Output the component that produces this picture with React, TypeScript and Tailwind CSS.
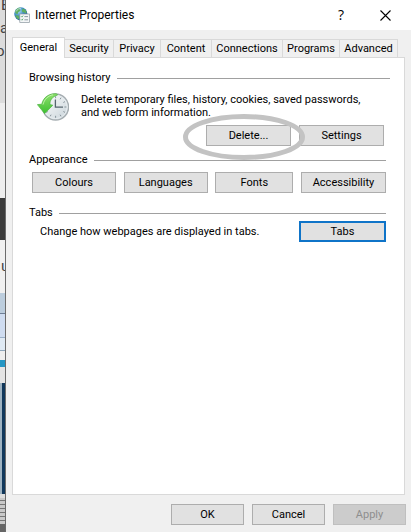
import { useState, type ReactNode } from "react";

import clsx from "clsx";

const tabs = [
  { name: "General", width: "w-[53px]" },
  { name: "Security", width: "w-[49px]" },
  { name: "Privacy", width: "w-[47px]" },
  { name: "Content", width: "w-[51px]" },
  { name: "Connections", width: "w-[71px]" },
  { name: "Programs", width: "w-[57px]" },
  { name: "Advanced", width: "w-[58px]" },
];

function GlobeIcon() {
  return (
    <svg viewBox="0 0 16 16" className="size-4 shrink-0" aria-hidden="true">
      <defs>
        <radialGradient id="globe" cx="0.35" cy="0.3" r="0.8">
          <stop offset="0" stopColor="#a9dcf4" />
          <stop offset="0.5" stopColor="#3787c4" />
          <stop offset="1" stopColor="#174a86" />
        </radialGradient>
      </defs>
      <circle cx="6.8" cy="6.8" r="6.6" fill="url(#globe)" />
      <path
        d="M1 4.2C2.4 1.6 4.6.6 6.8.6L5.4 2.4 6.6 3.8 4.2 5.2 3.6 7.2 1.6 6.6zM8.6 1.6l2.6.8 1.6 2.8-1.4 1.2-1.8-1.4-1.2.4-.6-2zM2.4 8.2l2.2.4.8 1.8-.8 2.2C3 11.6 1.8 10 1.2 8.4z"
        fill="#5fae62"
      />
      <path d="M2 4.5C3.2 2.4 5 1.4 7 1.2" fill="none" stroke="#d9eef8" strokeWidth="0.7" />
      <rect x="5.8" y="7" width="9.8" height="8.6" fill="#f4f6f7" stroke="#8b979e" strokeWidth="0.7" />
      <path d="M7.1 9.3l.8.8 1.2-1.5M7.1 12.4l.8.8 1.2-1.5" fill="none" stroke="#3f9a55" strokeWidth="0.8" />
      <path d="M10.4 9.6h3.6M10.4 12.8h3.6" stroke="#7f9099" strokeWidth="0.9" />
    </svg>
  );
}

function HistoryIcon() {
  return (
    <svg viewBox="0 0 32 28" className="h-7 w-8 shrink-0" aria-hidden="true">
      <defs>
        <linearGradient id="dial" x1="0" y1="0" x2="1" y2="1">
          <stop offset="0" stopColor="#ffffff" />
          <stop offset="1" stopColor="#c8d3d9" />
        </linearGradient>
        <linearGradient id="arrow" x1="0" y1="0" x2="0" y2="1">
          <stop offset="0" stopColor="#8fe06e" />
          <stop offset="1" stopColor="#3cbf30" />
        </linearGradient>
      </defs>
      <circle cx="18.6" cy="14" r="13" fill="url(#dial)" stroke="#a5adb1" strokeWidth="1.4" />
      <circle cx="18.6" cy="14" r="11.6" fill="none" stroke="#e7edf0" strokeWidth="1" />
      <path
        d="M18.6 3.2v2M18.6 22.8v2M27.4 14h2M24 4.7l-.9 1.6M28 8.6l-1.6.9M28 19.4l-1.6-.9M24 23.3l-.9-1.6M13.2 23.3l.9-1.6M9.3 19.4l1.5-.9"
        stroke="#87949b"
        strokeWidth="1"
      />
      <path d="M18.4 6.4v7.8h7.6" fill="none" stroke="#56656e" strokeWidth="1.3" />
      <path
        d="M19.5.8C12 .2 6.2 4.4 4.8 11.2L.4 11.6l7.2 9 8.2-8.4-2.8-.6C12.6 7.6 15 3.6 20.6 2z"
        fill="url(#arrow)"
        stroke="#4bb53d"
        strokeWidth="0.7"
      />
      <path d="M6 11.6C7.2 6.4 11 2.8 16 1.8" fill="none" stroke="#c6f5b0" strokeWidth="0.9" />
    </svg>
  );
}

function Button({
  children,
  className,
  disabled,
}: {
  children: ReactNode;
  className: string;
  disabled?: boolean;
}) {
  return (
    <button
      type="button"
      disabled={disabled}
      className={clsx(
        "flex h-[21px] items-center justify-center whitespace-nowrap",
        disabled
          ? "border border-[#bfbfbf] bg-[#cccccc] text-[#8e8e8e]"
          : "bg-[#e1e1e1]",
        className
      )}
    >
      {children}
    </button>
  );
}

function GroupTitle({ children }: { children: ReactNode }) {
  return (
    <div className="flex h-4 items-center gap-[6px]">
      <h2 className="whitespace-nowrap">{children}</h2>
      <div className="mt-[2px] h-px flex-1 bg-[#a0a0a0]" />
    </div>
  );
}

// Sliver of the page that shows behind the dialog
function Backdrop() {
  return (
    <div
      className="flex w-[5px] shrink-0 flex-col overflow-hidden bg-[#ececec] text-[15px] leading-4 text-[#444444]"
      aria-hidden="true"
    >
      <div className="flex h-[103px] flex-col gap-[7px] bg-[#dcdcdc]">
        <span className="-mt-[3px] pl-px">E</span>
        <span>a</span>
        <span className="-ml-1">o</span>
      </div>
      <div className="h-[95px] bg-[#eeeeee]" />
      <div className="h-[42px] bg-[#3b3b3b]" />
      <div className="h-[53px] bg-[#f0f0f0] pt-[18px] pl-px">u</div>
      <div className="h-[21px] border-b border-[#6e7e95] bg-[#bccddd]" />
      <div className="h-[24px] border-b border-[#9bb0c8] bg-[#cfdcf0]" />
      <div className="h-[13px] border-b border-[#8ea6bb] bg-[#dfe9f3]" />
      <div className="h-[9px] bg-[#eeeeee]" />
      <div className="h-[7px] bg-[#2596c4]" />
      <div className="h-[16px] bg-[#e4e4e4]" />
      <div className="h-[111px] border-l-2 border-[#9eb2c0] bg-[#10375a]" />
      <div className="h-[4px] bg-[#dddddd]" />
      <div className="flex flex-1 flex-col gap-[3px] bg-[#c9c9c9] pt-[2px]">
        <div className="h-px bg-[#777777]" />
        <div className="h-px bg-[#777777]" />
        <div className="h-px bg-[#777777]" />
        <div className="h-px bg-[#777777]" />
        <div className="h-px bg-[#777777]" />
        <div className="h-px bg-[#777777]" />
        <div className="flex-1 bg-[#666666]" />
      </div>
    </div>
  );
}

export default function App() {
  const [active, setActive] = useState("General");

  return (
    <div className="flex min-h-screen font-['Roboto',sans-serif] text-[11px] leading-[13px] text-black">
      <Backdrop />

      <main className="flex min-w-0 flex-1 flex-col border-l border-[#6b6b6b] bg-[#f0f0f0]">
        <header className="flex h-[30px] items-center bg-white pr-5 pl-2">
          <GlobeIcon />
          <h1 className="ml-[5px] flex-1 text-[12px] leading-4">Internet Properties</h1>
          <button type="button" aria-label="Help" className="mr-9 font-['Open_Sans',sans-serif] text-[14px] leading-4">
            ?
          </button>
          <button type="button" aria-label="Close">
            <svg viewBox="0 0 11 11" className="size-[11px]" aria-hidden="true">
              <path d="M.5.5l10 10M10.5.5l-10 10" stroke="#000" strokeWidth="1.1" />
            </svg>
          </button>
        </header>

        <div className="flex flex-1 flex-col px-[6px] pt-[7px]">
          <nav role="tablist" className="flex h-[20px] items-end">
            {tabs.map((tab) => (
              <button
                key={tab.name}
                type="button"
                role="tab"
                aria-selected={active === tab.name}
                onClick={() => setActive(tab.name)}
                className={clsx(
                  "flex items-center justify-center border-t border-r border-[#d9d9d9]",
                  tab.width,
                  active === tab.name
                    ? "z-10 -mb-px h-[21px] border-l bg-white pb-[2px]"
                    : "h-[18px]"
                )}
              >
                {tab.name}
              </button>
            ))}
          </nav>

          <div role="tabpanel" className="flex-1 border border-[#d9d9d9] bg-white pt-[11px] pr-[18px] pl-4">
            <section>
              <div className="-mr-1">
                <GroupTitle>Browsing history</GroupTitle>
              </div>
              <div className="mt-2 flex pl-2">
                <HistoryIcon />
                <p className="ml-3 h-[26px] flex-1">
                  Delete temporary files, history, cookies, saved passwords,
                  <br />
                  and web form information.
                </p>
              </div>
              <div className="mt-1 flex justify-end gap-2 pr-[2px]">
                <div className="relative">
                  <Button className="w-[85px] border border-[#adadad]">Delete...</Button>
                  <svg
                    viewBox="0 0 122 46"
                    className="pointer-events-none absolute -top-[11px] -left-[23px] h-[46px] w-[122px] max-w-none"
                    aria-hidden="true"
                  >
                    <ellipse cx="61" cy="23" rx="58.5" ry="20.5" fill="none" stroke="#c3c3c3" strokeWidth="5" />
                  </svg>
                </div>
                <Button className="w-[85px] border border-[#adadad]">Settings</Button>
              </div>
            </section>

            <section className="mt-[5px]">
              <GroupTitle>Appearance</GroupTitle>
              <div className="mt-[5px] flex justify-between pl-[3px]">
                <Button className="w-[84px] border border-[#adadad]">Colours</Button>
                <Button className="w-[84px] border border-[#adadad]">Languages</Button>
                <Button className="w-[78px] border border-[#adadad]">Fonts</Button>
                <Button className="w-[85px] border border-[#adadad]">Accessibility</Button>
              </div>
            </section>

            <section className="mt-[11px]">
              <GroupTitle>Tabs</GroupTitle>
              <div className="mt-px flex items-center justify-between pl-[11px]">
                <p>Change how webpages are displayed in tabs.</p>
                <Button className="w-[87px] border-2 border-[#0f74c8]">Tabs</Button>
              </div>
            </section>
          </div>
        </div>

        <footer className="flex justify-end gap-2 pt-[9px] pr-[5px] pb-[7px]">
          <Button className="w-[73px] border border-[#adadad]">OK</Button>
          <Button className="w-[73px] border border-[#adadad]">Cancel</Button>
          <Button className="w-[73px]" disabled>
            Apply
          </Button>
        </footer>
      </main>
    </div>
  );
}
